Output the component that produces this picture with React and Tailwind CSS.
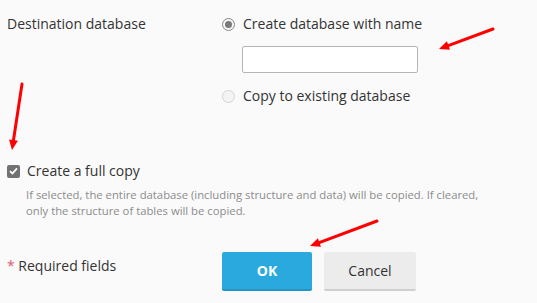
import { useState } from "react";

// red annotation arrows drawn over the form
function Arrow({ x1, y1, x2, y2 }) {
  const ang = Math.atan2(y2 - y1, x2 - x1);
  const len = 11;
  const spread = 0.42;
  const ax = x2 - len * Math.cos(ang - spread);
  const ay = y2 - len * Math.sin(ang - spread);
  const bx = x2 - len * Math.cos(ang + spread);
  const by = y2 - len * Math.sin(ang + spread);
  const sx = x2 - 7 * Math.cos(ang);
  const sy = y2 - 7 * Math.sin(ang);
  return (
    <g>
      <line x1={x1} y1={y1} x2={sx} y2={sy} stroke="#ff0000" strokeWidth="3" strokeLinecap="round" />
      <polygon points={`${x2},${y2} ${ax},${ay} ${bx},${by}`} fill="#ff0000" />
    </g>
  );
}

function Radio({ checked, onClick }) {
  return (
    <span
      onClick={onClick}
      className={
        checked
          ? "w-[13px] h-[13px] shrink-0 rounded-full border border-[#8a8a8a] bg-[#f4f4f4] flex items-center justify-center"
          : "w-[13px] h-[13px] shrink-0 rounded-full border border-[#d4d4d4] bg-[#f4f4f4]"
      }
    >
      {checked && <span className="w-[7px] h-[7px] rounded-full bg-[#7a7a7a]" />}
    </span>
  );
}

export default function App() {
  const [mode, setMode] = useState("create");
  const [fullCopy, setFullCopy] = useState(true);
  const [name, setName] = useState("");

  return (
    <div
      className="relative w-[537px] h-[303px] bg-[#fafafa] text-[#333333] text-[14px] leading-[18px] pl-[7px] overflow-hidden"
      style={{ fontFamily: '"Open Sans", "Noto Sans", sans-serif' }}
    >
      {/* Destination */}
      <div className="grid grid-cols-[215px_1fr] pt-[15px]">
        <div>Destination database</div>
        <div className="flex flex-col">
          <label className="flex items-center gap-[8px] h-[18px]">
            <Radio checked={mode === "create"} onClick={() => setMode("create")} />
            <span>Create database with name</span>
          </label>
          <input
            value={name}
            onChange={(e) => setName(e.target.value)}
            className="mt-[13px] ml-[20px] w-[176px] h-[27px] bg-white border border-[#b5b5b5] rounded-[2px] outline-none px-2"
          />
          <label className="flex items-center gap-[8px] h-[18px] mt-[14px]">
            <Radio checked={mode === "copy"} onClick={() => setMode("copy")} />
            <span>Copy to existing database</span>
          </label>
        </div>
      </div>

      {/* Full copy */}
      <label className="flex items-center gap-[7px] h-[18px] mt-[57px]">
        <span
          onClick={() => setFullCopy(!fullCopy)}
          className="w-[13px] h-[13px] rounded-[2px] bg-[#727272] flex items-center justify-center"
        >
          {fullCopy && (
            <svg width="9" height="8" viewBox="0 0 9 8">
              <path d="M1 4.2 L3.4 6.5 L8 1.3" fill="none" stroke="#ffffff" strokeWidth="1.8" />
            </svg>
          )}
        </span>
        <span>Create a full copy</span>
      </label>
      <p className="mt-[7px] ml-[19px] w-[470px] text-[11.3px] leading-[16px] text-[#8c8c8c]">
        If selected, the entire database (including structure and data) will be copied. If cleared,
        only the structure of tables will be copied.
      </p>

      {/* Footer */}
      <div className="flex mt-[33px]">
        <div className="w-[215px] pt-[5px]">
          <span className="text-[#e4566a]">*</span> Required fields
        </div>
        <div className="flex gap-[12px]">
          <button className="w-[90px] h-[39px] rounded-[2px] bg-[#29a9de] border-b-2 border-[#2195c6] text-white font-bold text-[14px]">
            OK
          </button>
          <button className="w-[92px] h-[39px] rounded-[2px] bg-[#ececec] border-b-2 border-[#cfcfcf] text-[#333333] text-[14px]">
            Cancel
          </button>
        </div>
      </div>

      <svg className="absolute inset-0 pointer-events-none" width="537" height="303" viewBox="0 0 537 303">
        <Arrow x1={22} y1={84} x2={12} y2={150} />
        <Arrow x1={493} y1={29} x2={439} y2={49} />
        <Arrow x1={377} y1={221} x2={310} y2={246} />
      </svg>
    </div>
  );
}
